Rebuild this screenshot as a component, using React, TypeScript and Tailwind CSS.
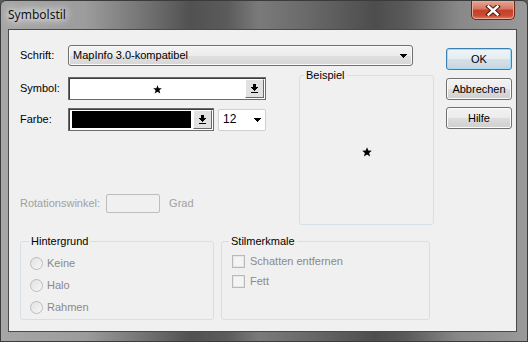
import React from 'react';

const DropArrow = () => (
    <svg width="7" height="9" viewBox="0 0 7 9" shapeRendering="crispEdges">
        <path d="M2 0h3v3h2v1h-1v1h-1v1h-1v1h-1v-1h-1v-1h-1v-1h-1v-1h2z" fill="#000" />
        <rect x="0" y="8" width="7" height="1" fill="#000" />
    </svg>
);

const Tri = () => (
    <svg width="7" height="4" viewBox="0 0 7 4" shapeRendering="crispEdges">
        <path d="M0 0h7v1h-1v1h-1v1h-1v1h-1v-1h-1v-1h-1v-1h-1z" fill="#000" />
    </svg>
);

const Star = ({ size = 10 }: { size?: number }) => (
    <svg width={size} height={size} viewBox="0 0 10 10">
        <path d="M5 0.3l1.3 3.3 3.5.1-2.7 2.2 1 3.5L5 7.4 1.9 9.4l1-3.5L.2 3.7l3.5-.1z" fill="#000" />
    </svg>
);

// raised classic button used inside the symbol/colour pickers
const PickerButton = () => (
    <div className="w-[19px] h-full flex items-center justify-center bg-[#e1e1e1] border border-t-white border-l-white border-r-[#696969] border-b-[#696969]">
        <DropArrow />
    </div>
);

const DlgButton = ({ label, primary }: { label: string; primary?: boolean }) => (
    <div
        className={
            'w-[66px] h-[22px] rounded-[3px] border flex items-center justify-center text-[11px] text-black ' +
            (primary
                ? 'border-[#3c7fb1] shadow-[inset_0_0_0_1px_#9fdcf7] bg-[linear-gradient(#eef4f7_0%,#e6edf1_50%,#d6e1e7_50%,#cbd6dc_100%)]'
                : 'border-[#707070] shadow-[inset_0_0_0_1px_#fbfbfb] bg-[linear-gradient(#f2f2f2_0%,#ebebeb_50%,#dddddd_50%,#cfcfcf_100%)]')
        }
    >
        {label}
    </div>
);

const Radio = ({ label }: { label: string }) => (
    <div className="h-[22px] flex items-center gap-[4px] pl-[9px]">
        <span className="w-[13px] h-[13px] rounded-full border border-[#bcbcbc] bg-[linear-gradient(135deg,#e2e2e2,#f6f6f6)]" />
        <span className="text-[#8a8a8a]">{label}</span>
    </div>
);

const Check = ({ label }: { label: string }) => (
    <div className="h-[20px] flex items-center gap-[5px] pl-[10px]">
        <span className="w-[13px] h-[13px] border border-[#b9b9b9] bg-[#f4f4f4] shadow-[inset_0_0_0_1px_#e6e6e6]" />
        <span className="text-[#8a8a8a]">{label}</span>
    </div>
);

export default function App() {
    return (
        <div className="w-[528px] h-[342px] overflow-hidden bg-[#5a5a5a]">
            <div className="w-[528px] h-[342px] flex flex-col rounded-t-[6px] border border-[#3b3b3b] bg-[linear-gradient(90deg,#a6a6a6_0%,#9c9c9c_16%,#747474_27%,#515151_36%,#5b5b5b_43%,#7a7a7a_49%,#6c6c6c_57%,#4d4d4d_71%,#5a5a5a_77%,#888888_87%,#9a9a9a_100%)] font-['Liberation_Sans',Arial,sans-serif] text-[11px] leading-[13px]">
                {/* Title bar */}
                <div className="h-[28px] flex items-start">
                    <div className="pl-[7px] pt-[6px] text-[12px] leading-[16px] text-[#111] font-['Noto_Sans',sans-serif] [text-shadow:0_0_6px_#fff,0_0_10px_#fff,0_0_14px_#ddd]">
                        Symbolstil
                    </div>
                    <div className="ml-auto mr-[12px] w-[44px] h-[19px] rounded-b-[5px] border border-t-0 border-[#6a2619] bg-[linear-gradient(#e6a593_0%,#d47661_45%,#c4402a_50%,#c94a31_80%,#df7a5f_100%)] shadow-[inset_0_0_0_1px_#eba999] flex items-center justify-center">
                        <svg width="16" height="11" viewBox="0 0 16 11">
                            <path d="M3.5 1.5L12.5 9.5M12.5 1.5L3.5 9.5" stroke="#4a1c12" strokeWidth="4.4" strokeLinecap="square" />
                            <path d="M3.5 1.5L12.5 9.5M12.5 1.5L3.5 9.5" stroke="#fff" strokeWidth="2.4" strokeLinecap="square" />
                        </svg>
                    </div>
                </div>

                {/* Client area */}
                <div className="ml-[7px] w-[509px] h-[303px] border border-[#4a4a4a] bg-[#f0f0f0] flex pl-[11px] pt-[15px]">
                    {/* Left content */}
                    <div className="w-[414px] flex flex-col">
                        <div className="h-[21px] flex items-center">
                            <span className="w-[48px]">Schrift:</span>
                            <div className="w-[345px] h-[21px] rounded-[3px] border border-[#707070] bg-[linear-gradient(#f3f3f3_0%,#ececec_50%,#e0e0e0_50%,#d6d6d6_100%)] shadow-[inset_0_0_0_1px_#fafafa] flex items-center pl-[4px] pr-[5px]">
                                <span className="flex-1">MapInfo 3.0-kompatibel</span>
                                <Tri />
                            </div>
                        </div>

                        <div className="mt-[3px] h-[156px] flex">
                            <div className="w-[246px] flex flex-col">
                                <div className="mt-[8px] h-[23px] flex items-center">
                                    <span className="w-[48px]">Symbol:</span>
                                    <div className="w-[198px] h-[23px] border border-[#6b6b6b] shadow-[inset_1px_1px_0_#3c3c3c] bg-white flex p-[1px]">
                                        <div className="flex-1 flex items-center justify-center pt-[2px]">
                                            <Star size={9} />
                                        </div>
                                        <PickerButton />
                                    </div>
                                </div>

                                <div className="mt-[8px] h-[23px] flex items-center">
                                    <span className="w-[48px]">Farbe:</span>
                                    <div className="w-[146px] h-[23px] border border-[#6b6b6b] shadow-[inset_1px_1px_0_#3c3c3c] bg-white flex p-[1px]">
                                        <div className="flex-1 pl-[2px] pr-[2px] py-[1px]">
                                            <div className="w-full h-full bg-black" />
                                        </div>
                                        <PickerButton />
                                    </div>
                                    <div className="ml-[4px] w-[48px] h-[22px] rounded-[2px] border border-[#cfcfcf] bg-white flex items-center pl-[4px] pr-[4px]">
                                        <span className="flex-1 text-[12px]">12</span>
                                        <Tri />
                                    </div>
                                </div>

                                <div className="mt-[63px] h-[19px] flex items-center text-[#a0a0a0]">
                                    <span>Rotationswinkel:</span>
                                    <div className="ml-[6px] w-[54px] h-[19px] rounded-[2px] border border-[#bdbdbd] bg-[#f0f0f0]" />
                                    <span className="ml-[9px]">Grad</span>
                                </div>
                            </div>

                            <fieldset className="ml-[33px] w-[135px] h-[156px] rounded-[3px] border border-[#d5dfe5]">
                                <legend className="ml-[4px] px-[2px] text-black">Beispiel</legend>
                                <div className="h-[140px] flex items-center justify-center">
                                    <Star size={10} />
                                </div>
                            </fieldset>
                        </div>

                        <div className="mt-[10px] flex gap-[7px]">
                            <fieldset className="w-[194px] h-[85px] rounded-[3px] border border-[#d5dfe5]">
                                <legend className="ml-[8px] px-[2px] text-black">Hintergrund</legend>
                                <div className="pt-[4px] flex flex-col">
                                    <Radio label="Keine" />
                                    <Radio label="Halo" />
                                    <Radio label="Rahmen" />
                                </div>
                            </fieldset>
                            <fieldset className="w-[209px] h-[85px] rounded-[3px] border border-[#d5dfe5]">
                                <legend className="ml-[7px] px-[2px] text-black">Stilmerkmale</legend>
                                <div className="pt-[3px] flex flex-col">
                                    <Check label="Schatten entfernen" />
                                    <Check label="Fett" />
                                </div>
                            </fieldset>
                        </div>
                    </div>

                    {/* Dialog buttons */}
                    <div className="ml-[12px] pt-[3px] flex flex-col">
                        <DlgButton label="OK" primary />
                        <div className="mt-[8px]">
                            <DlgButton label="Abbrechen" />
                        </div>
                        <div className="mt-[7px]">
                            <DlgButton label="Hilfe" />
                        </div>
                    </div>
                </div>
            </div>
        </div>
    );
}
